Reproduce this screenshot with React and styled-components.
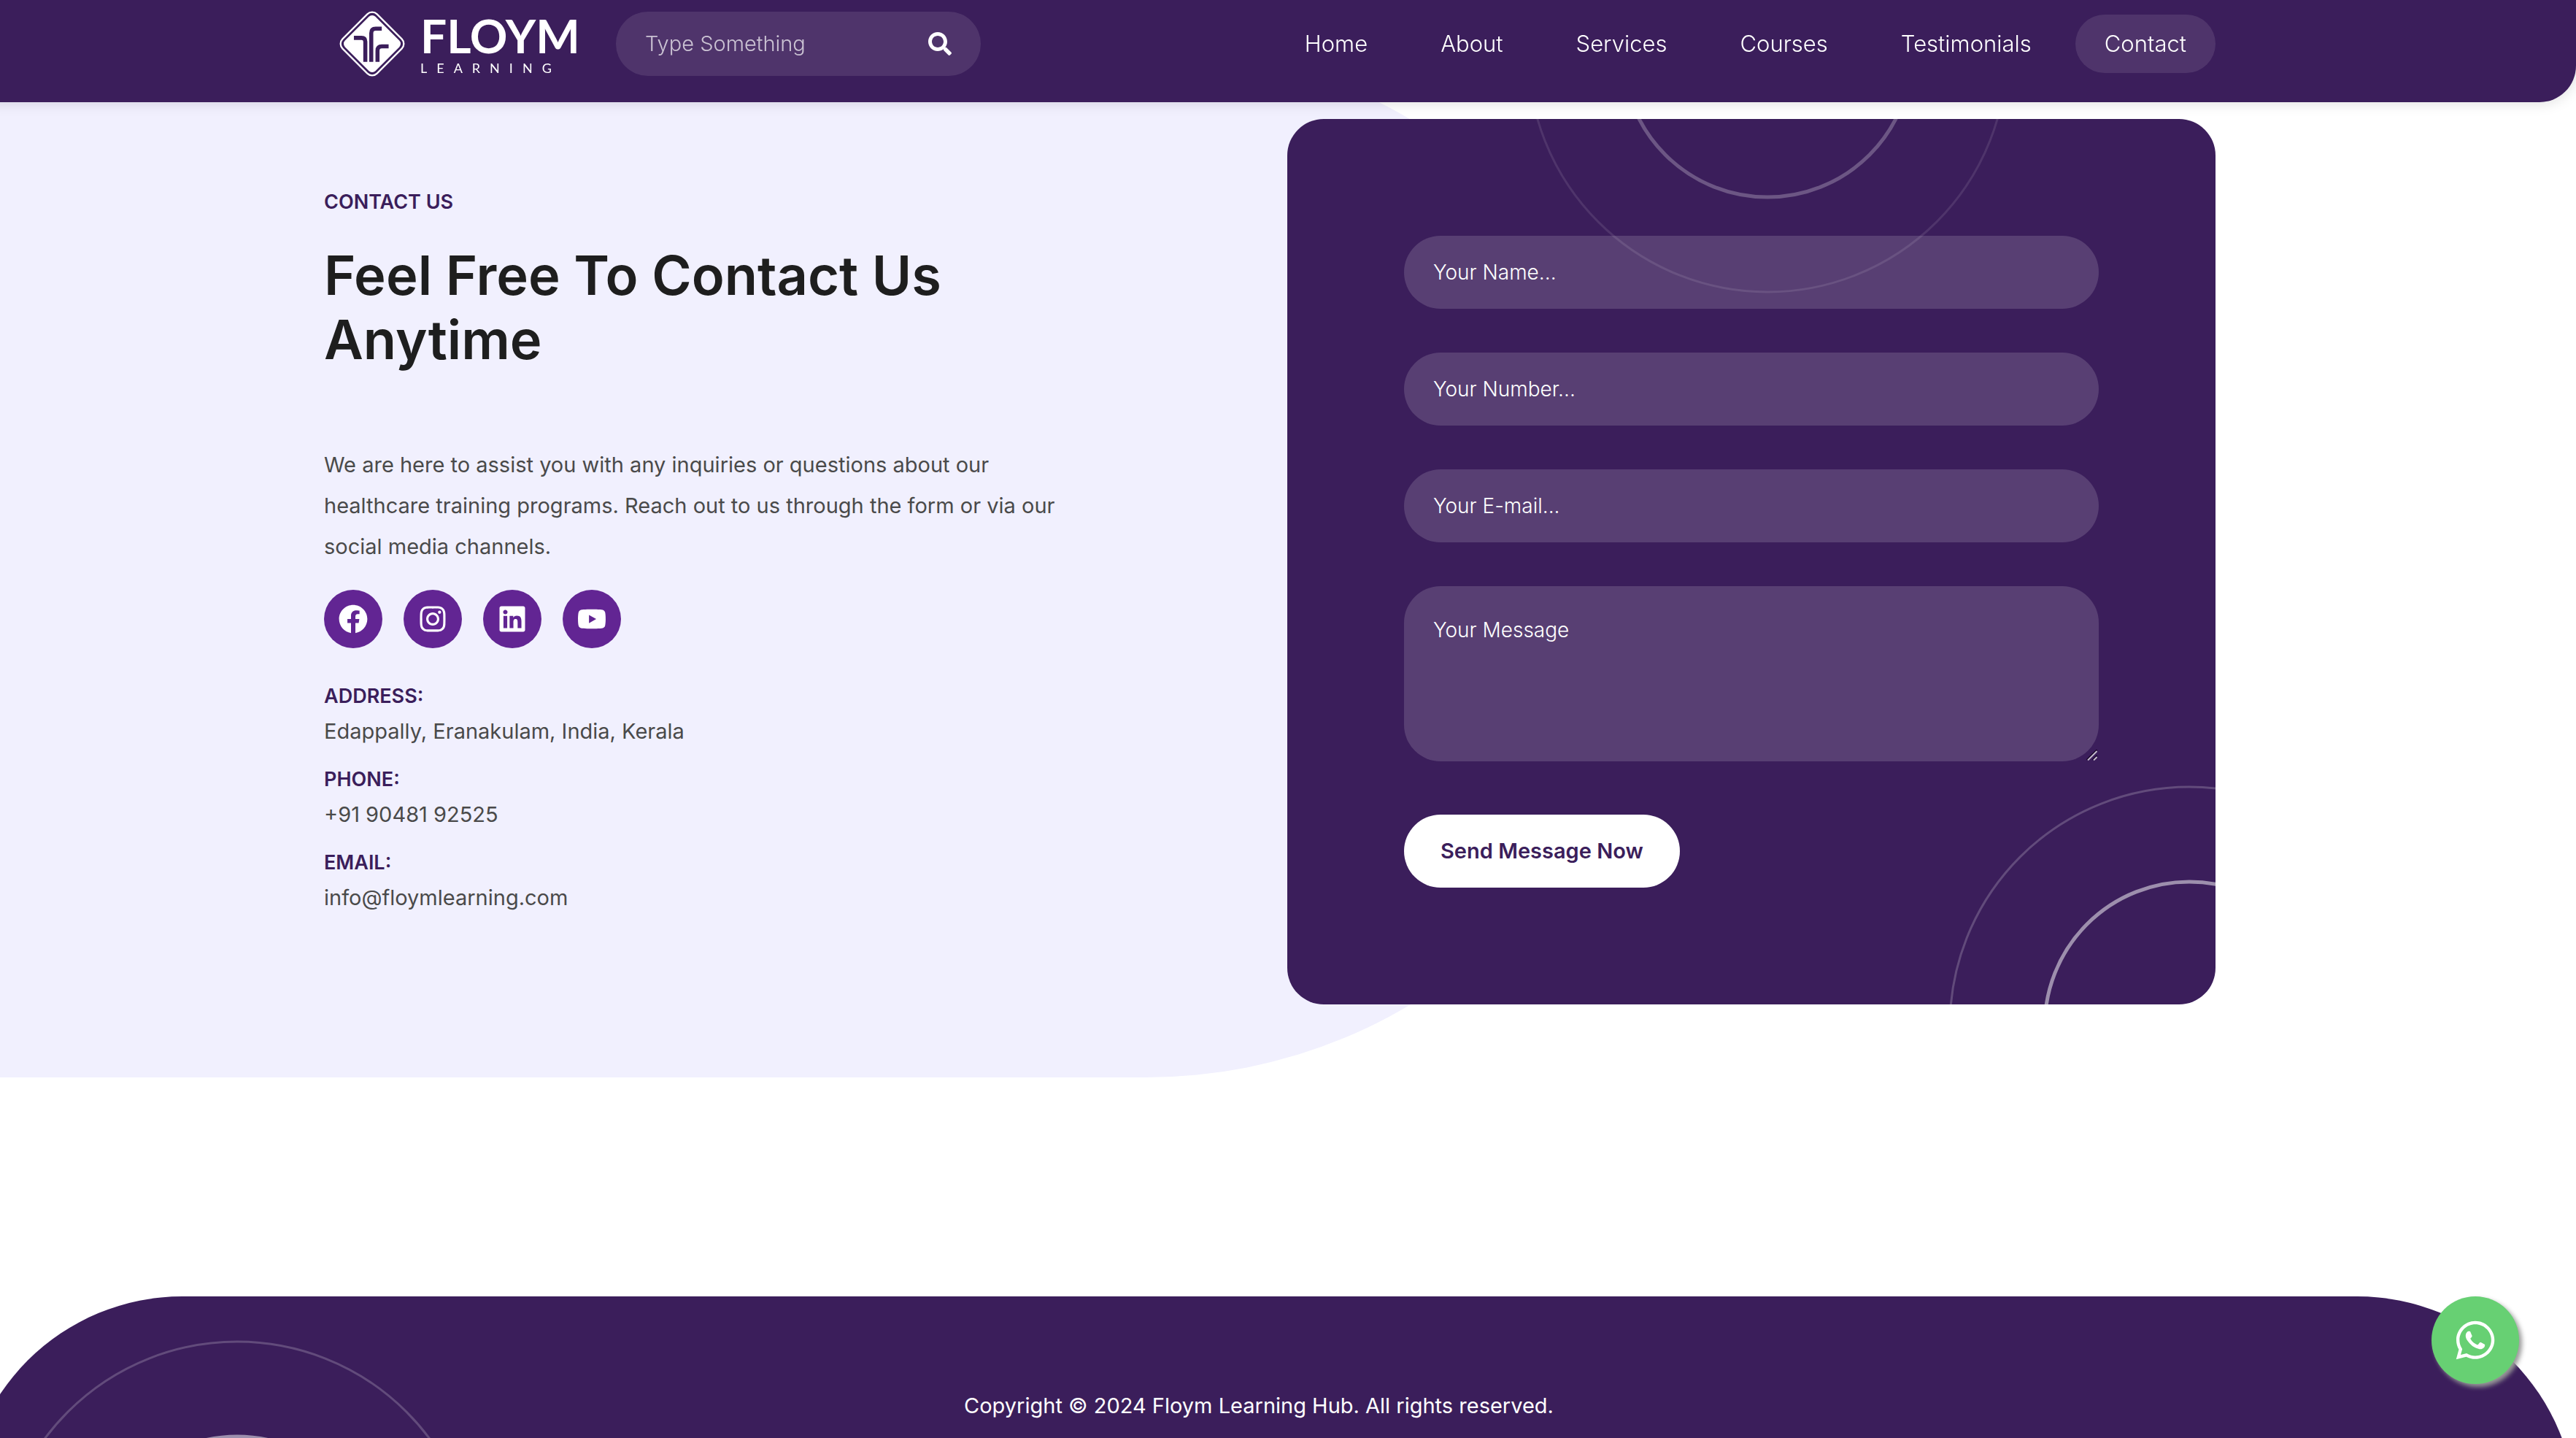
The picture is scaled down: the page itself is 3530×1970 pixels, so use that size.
import React from "react";
import styled, { createGlobalStyle } from "styled-components";
import { FaFacebook, FaInstagram, FaLinkedin, FaYoutube, FaWhatsapp, FaSearch } from "react-icons/fa";

const purple = "#3b1e5b";
const lavender = "#f1f0fe";

const GlobalStyle = createGlobalStyle`
  *, *::before, *::after { box-sizing: border-box; }
  body {
    margin: 0;
    background: #fff;
    font-family: Inter, "Open Sans", sans-serif;
    font-size: 29px;
    line-height: 56px;
    color: #4a4a4a;
  }
  h1, h2, p, dl, dd { margin: 0; }
  a { color: inherit; text-decoration: none; }
  input, textarea, button { font: inherit; border: 0; margin: 0; }
`;

const Page = styled.div`
  height: 100vh;
  margin-left: -50px;
  overflow: hidden;
`;

const Container = styled.div`
  width: 100%;
  max-width: 2640px;
  margin: 0 auto;
  padding: 0 24px;
`;

const Header = styled.header`
  position: fixed;
  z-index: 10;
  top: 0;
  left: -50px;
  right: 0;
  height: 140px;
  background: ${purple};
  border-radius: 0 0 50px 50px;
  box-shadow: 0 0 20px rgba(0, 0, 0, 0.15);
`;

const HeaderRow = styled(Container)`
  display: flex;
  align-items: center;
  height: 120px;
`;

const Logo = styled.a`
  display: flex;
  align-items: center;
  width: 400px;
  padding-left: 18px;
  gap: 18px;
  color: #fff;

  svg { width: 96px; height: 96px; }
`;

const Wordmark = styled.span`
  display: flex;
  flex-direction: column;
  font-family: Lato, sans-serif;
`;

const BrandName = styled.span`
  font-size: 64px;
  font-weight: 700;
  line-height: 66px;
`;

const BrandSub = styled.span`
  font-size: 18px;
  line-height: 22px;
  letter-spacing: 13px;
`;

const SearchForm = styled.form`
  display: flex;
  align-items: center;
  width: 500px;
  height: 88px;
  padding: 0 40px;
  border-radius: 44px;
  background: rgba(255, 255, 255, 0.1);
`;

const SearchInput = styled.input`
  flex: 1;
  min-width: 0;
  padding: 0;
  background: transparent;
  color: #fff;
  font-weight: 300;
  outline: none;

  &::placeholder { color: rgba(255, 255, 255, 0.7); opacity: 1; }
`;

const SearchButton = styled.button`
  display: flex;
  padding: 0;
  background: transparent;
  color: #fff;
  font-size: 32px;
`;

const Nav = styled.nav`
  display: flex;
  gap: 20px;
  margin-left: auto;
`;

const NavLink = styled.a`
  height: 80px;
  padding: 0 40px;
  border-radius: 40px;
  font-size: 31px;
  font-weight: 300;
  line-height: 80px;
  color: #fff;
  background: ${(p) => (p.$active ? "rgba(255, 255, 255, 0.1)" : "transparent")};
`;

const Contact = styled.section`
  position: relative;
  margin: 64px 0 300px;
  padding: 99px 0 100px;

  &::before {
    content: "";
    position: absolute;
    inset: 0 35% 0 0;
    background: ${lavender};
    border-radius: 0 1000px 1000px 0;
  }
`;

const Columns = styled(Container)`
  position: relative;
  display: grid;
  grid-template-columns: 1fr 1fr;
  gap: 48px;
`;

const Intro = styled.div`
  max-width: 1050px;
  padding-top: 86px;
`;

const Eyebrow = styled.p`
  font-size: 27px;
  font-weight: 600;
  text-transform: uppercase;
  color: ${purple};
`;

const Title = styled.h1`
  margin: 28px 0 100px;
  font-size: 74px;
  font-weight: 600;
  line-height: 88px;
  color: #1e1e1e;
`;

const Socials = styled.div`
  display: flex;
  gap: 29px;
  margin: 31px 0 39px;
`;

const SocialLink = styled.a`
  display: flex;
  align-items: center;
  justify-content: center;
  width: 80px;
  height: 80px;
  border-radius: 50%;
  background: #622593;
  color: #fff;

  svg { width: auto; height: 40px; }
`;

const Details = styled.dl`
  display: grid;
  gap: 18px;
`;

const Term = styled.dt`
  font-size: 27px;
  font-weight: 600;
  line-height: 54px;
  text-transform: uppercase;
  color: ${purple};
`;

const Value = styled.dd`
  line-height: 42px;
`;

const Card = styled.form`
  position: relative;
  display: flex;
  flex-direction: column;
  align-items: flex-start;
  gap: 60px;
  padding: 160px;
  border-radius: 50px;
  background: ${purple};
  overflow: hidden;
`;

const Rings = styled.svg`
  position: absolute;
  width: 660px;
  height: 660px;
  fill: none;
  stroke: #fff;
  pointer-events: none;
`;

const TopRings = styled(Rings)`
  top: -421px;
  left: 328px;
`;

const CornerRings = styled(Rings)`
  right: -294px;
  bottom: -360px;
`;

const FooterRings = styled(Rings)`
  top: 60px;
  left: 45px;
`;

const Field = styled.input`
  position: relative;
  width: 100%;
  height: 100px;
  padding: 0 40px;
  border-radius: 50px;
  background: rgba(255, 255, 255, 0.15);
  color: #fff;
  font-size: 28px;
  font-weight: 300;
  outline: none;

  &::placeholder { color: #fff; opacity: 1; }
`;

const MessageBox = styled.div`
  position: relative;
  width: 100%;
`;

const MessageField = styled(Field)`
  display: block;
  height: 240px;
  padding: 32px 40px;
  resize: none;
`;

const Grip = styled.svg`
  position: absolute;
  right: 2px;
  bottom: 1px;
  width: 15px;
  height: 15px;
  fill: none;
`;

const SendButton = styled.button`
  height: 100px;
  margin-top: 13px;
  padding: 0 50px;
  border-radius: 50px;
  background: #fff;
  color: ${purple};
  font-weight: 600;
`;

const Footer = styled.footer`
  position: relative;
  height: 300px;
  border-radius: 300px 300px 0 0;
  background: ${purple};
  color: #fff;
  text-align: center;
  overflow: hidden;
`;

const Copyright = styled.p`
  padding: 122px 30px 0 0;
`;

const ChatButton = styled.a`
  position: fixed;
  z-index: 20;
  right: 78px;
  bottom: 74px;
  display: flex;
  align-items: center;
  justify-content: center;
  width: 120px;
  height: 120px;
  border-radius: 50%;
  background: #67d073;
  color: #fff;
  font-size: 60px;
  box-shadow: 4px 4px 6px #999;
`;

function RingPair({ as: Place, inner, outer }) {
  return (
    <Place viewBox="0 0 660 660" aria-hidden="true">
      <circle cx="330" cy="330" r="328" strokeWidth="3" strokeOpacity={outer} />
      <circle cx="330" cy="330" r="198" strokeWidth="5" strokeOpacity={inner} />
    </Place>
  );
}

function LogoMark() {
  return (
    <svg viewBox="0 0 92 92" aria-hidden="true">
      <g transform="rotate(45 46 46)">
        <rect x="14" y="14" width="64" height="64" rx="9" fill="none" stroke="#fff" strokeWidth="2.2" />
        <rect x="17.8" y="17.8" width="56.4" height="56.4" rx="6" fill="#fff" />
      </g>
      <g fill="none" stroke={purple} strokeWidth="5.3">
        <path d="M22 38.2h10q5 0 5 5v26.5" />
        <path d="M44.8 69.7V32q0-5.8 5.8-5.8h8" />
        <path d="M53 69.7V55q0-5.6 5.6-5.6h9" />
      </g>
    </svg>
  );
}

function ResizeGrip() {
  return (
    <Grip viewBox="0 0 15 15" aria-hidden="true">
      <path d="M0.5 14L14.5 0M8.5 14L14.5 8" stroke="#120022" strokeWidth="1.6" />
      <path d="M2 14.5L14.5 2M10 14.5L14.5 10" stroke="#c4bbcd" strokeWidth="2" />
    </Grip>
  );
}

const links = ["Home", "About", "Services", "Courses", "Testimonials", "Contact"];

const socials = [
  ["Facebook", FaFacebook],
  ["Instagram", FaInstagram],
  ["LinkedIn", FaLinkedin],
  ["YouTube", FaYoutube],
];

const details = [
  ["Address:", "Edappally, Eranakulam, India, Kerala"],
  ["Phone:", "+91 90481 92525"],
  ["Email:", "info@floymlearning.com"],
];

export default function App() {
  return (
    <Page>
      <GlobalStyle />
      <Header>
        <HeaderRow>
          <Logo href="#home">
            <LogoMark />
            <Wordmark>
              <BrandName>FLOYM</BrandName>
              <BrandSub>LEARNING</BrandSub>
            </Wordmark>
          </Logo>
          <SearchForm role="search">
            <SearchInput type="text" aria-label="Search" placeholder="Type Something" />
            <SearchButton type="submit" aria-label="Search">
              <FaSearch />
            </SearchButton>
          </SearchForm>
          <Nav>
            {links.map((name) => (
              <NavLink key={name} href={`#${name.toLowerCase()}`} $active={name === "Contact"}>
                {name}
              </NavLink>
            ))}
          </Nav>
        </HeaderRow>
      </Header>

      <Contact id="contact">
        <Columns>
          <Intro>
            <Eyebrow>Contact Us</Eyebrow>
            <Title>Feel Free To Contact Us Anytime</Title>
            <p>
              We are here to assist you with any inquiries or questions about our healthcare
              training programs. Reach out to us through the form or via our social media channels.
            </p>
            <Socials>
              {socials.map(([name, Icon]) => (
                <SocialLink key={name} href={`#${name.toLowerCase()}`} aria-label={name}>
                  <Icon />
                </SocialLink>
              ))}
            </Socials>
            <Details>
              {details.map(([term, value]) => (
                <div key={term}>
                  <Term>{term}</Term>
                  <Value>{value}</Value>
                </div>
              ))}
            </Details>
          </Intro>

          <Card>
            <RingPair as={TopRings} inner={0.25} outer={0.1} />
            <RingPair as={CornerRings} inner={0.5} outer={0.2} />
            <Field type="text" aria-label="Your name" placeholder="Your Name..." />
            <Field type="tel" aria-label="Your number" placeholder="Your Number..." />
            <Field type="email" aria-label="Your e-mail" placeholder="Your E-mail..." />
            <MessageBox>
              <MessageField as="textarea" aria-label="Your message" placeholder="Your Message" />
              <ResizeGrip />
            </MessageBox>
            <SendButton type="submit">Send Message Now</SendButton>
          </Card>
        </Columns>
      </Contact>

      <Footer>
        <RingPair as={FooterRings} inner={0.5} outer={0.2} />
        <Copyright>Copyright © 2024 Floym Learning Hub. All rights reserved.</Copyright>
      </Footer>

      <ChatButton href="#whatsapp" aria-label="Chat on WhatsApp">
        <FaWhatsapp />
      </ChatButton>
    </Page>
  );
}
